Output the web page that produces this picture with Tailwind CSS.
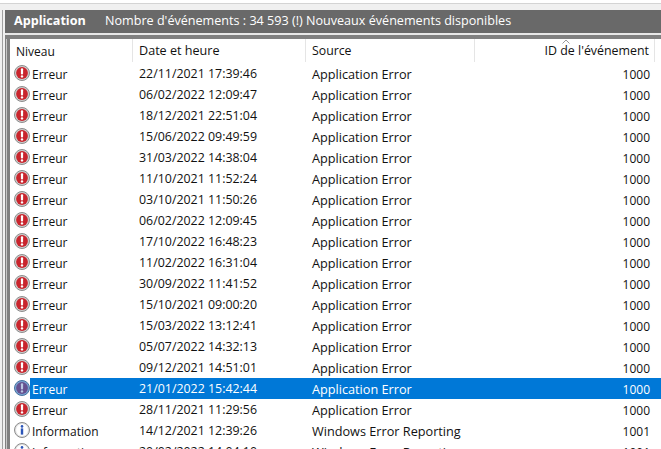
<!DOCTYPE html>
<html lang="fr">
    <head>
        <meta charset="UTF-8">
        <title>Application</title>
        <script src="https://cdn.jsdelivr.net/npm/@tailwindcss/browser@4"></script>
    </head>
    <body class="bg-white w-[661px] h-[449px] overflow-hidden font-['Open_Sans',sans-serif] text-[12px] text-[#111]">
        <div class="h-[3px] bg-white"></div>
        <div class="h-[7px] bg-[#f0f0f0] border-t border-[#d4d4d4]"></div>
        <div class="flex">
            <div class="w-[5px] h-[439px] bg-[#f0f0f0] pl-[2px]">
                <div class="w-px h-full bg-[#a0a0a0]"></div>
            </div>
            <div class="flex-1">
                <!-- Barre de titre -->
                <div class="h-[23px] bg-[#696969] text-white flex items-center pl-[9px] text-[12.6px]">
                    <span class="font-bold w-[91px]">Application</span>
                    <span>Nombre d'événements : 34 593 (!) Nouveaux événements disponibles</span>
                </div>
                <div class="h-[2px] bg-[#e8e8e8]"></div>
                <div class="h-[4px] bg-[#808080]"></div>
                <div class="flex">
                    <div class="w-[5px] h-[410px] bg-[#808080] pl-px">
                        <div class="w-px h-full bg-[#c8c8c8]"></div>
                    </div>
                    <div class="flex-1 bg-white">
                        <div id="entete" class="flex h-[24px] items-start">
                            <div class="w-[123px] h-[23px] pl-[6px] pt-[2px] flex items-center border-r border-[#e5e5e5]">Niveau</div>
                            <div class="w-[173px] h-[23px] pl-[6px] pt-[2px] flex items-center border-r border-[#e5e5e5] text-[12.6px]">Date et heure</div>
                            <div class="w-[169px] h-[23px] pl-[6px] pt-[2px] flex items-center border-r border-[#e5e5e5] text-[12.3px]">Source</div>
                            <div class="w-[180px] h-[23px] pr-[5px] pt-[2px] flex items-center justify-end border-r border-[#e5e5e5] relative text-[12.4px]">
                                ID de l'événement
                                <svg class="absolute top-0 right-[84px]" width="8" height="5" viewBox="0 0 8 5"><path d="M0.5 4.5 L4 1 L7.5 4.5" fill="none" stroke="#9a9a9a"/></svg>
                            </div>
                        </div>
                        <div id="lignes"></div>
                    </div>
                </div>
            </div>
        </div>

        <script>
        const erreur = `<svg width="16" height="16" viewBox="0 0 16 16"><circle cx="8" cy="8" r="7.5" fill="#cfcfcf" stroke="#8c8c8c"/><circle cx="8" cy="8" r="5.9" fill="#c9252d"/><rect x="6.9" y="3.2" width="2.2" height="6.2" rx="1" fill="#fff"/><circle cx="8" cy="11.4" r="1.2" fill="#fff"/></svg>`;
        const erreurSel = `<svg width="16" height="16" viewBox="0 0 16 16"><circle cx="8" cy="8" r="7.5" fill="#7ba3d2" stroke="#46729f"/><circle cx="8" cy="8" r="5.9" fill="#65508f"/><rect x="6.9" y="3.2" width="2.2" height="6.2" rx="1" fill="#b9c6e2"/><circle cx="8" cy="11.4" r="1.2" fill="#b9c6e2"/></svg>`;
        const info = `<svg width="16" height="16" viewBox="0 0 16 16"><circle cx="8" cy="8" r="7.5" fill="#e4e4e4" stroke="#8c8c8c"/><circle cx="8" cy="8" r="5.9" fill="#fff"/><circle cx="8" cy="4.4" r="1.3" fill="#2c55b8"/><rect x="6.8" y="6.4" width="2.4" height="6.2" fill="#2c55b8"/></svg>`;

        const lignes = [
            ['22/11/2021 17:39:46'], ['06/02/2022 12:09:47'], ['18/12/2021 22:51:04'],
            ['15/06/2022 09:49:59'], ['31/03/2022 14:38:04'], ['11/10/2021 11:52:24'],
            ['03/10/2021 11:50:26'], ['06/02/2022 12:09:45'], ['17/10/2022 16:48:23'],
            ['11/02/2022 16:31:04'], ['30/09/2022 11:41:52'], ['15/10/2021 09:00:20'],
            ['15/03/2022 13:12:41'], ['05/07/2022 14:32:13'], ['09/12/2021 14:51:01'],
            ['21/01/2022 15:42:44', 'sel'], ['28/11/2021 11:29:56'],
            ['14/12/2021 12:39:26', 'info'], ['20/02/2022 14:04:10', 'info']
        ];

        document.getElementById('lignes').innerHTML = lignes.map(([date, type]) => {
            const sel = type === 'sel';
            const isInfo = type === 'info';
            const icone = isInfo ? info : sel ? erreurSel : erreur;
            const couleur = sel ? 'bg-[#0078d7] text-white' : '';
            return `<div class="flex h-[21px] items-center">
                <div class="w-[20px] shrink-0 h-full pl-[4px] pt-[2px]">${icone}</div>
                <div class="w-[103px] shrink-0 h-full flex items-center pl-[2px] pt-[2px] ${couleur}">${isInfo ? 'Information' : 'Erreur'}</div>
                <div class="flex-1 h-full flex items-center pt-[2px] ${couleur}">
                    <div class="w-[173px] pl-[6px] text-[12.4px]">${date}</div>
                    <div class="w-[169px] pl-[6px] text-[12.7px]">${isInfo ? 'Windows Error Reporting' : 'Application Error'}</div>
                    <div class="w-[180px] pr-[5px] text-right">${isInfo ? '1001' : '1000'}</div>
                </div>
            </div>`;
        }).join('');
        </script>
    </body>
</html>
